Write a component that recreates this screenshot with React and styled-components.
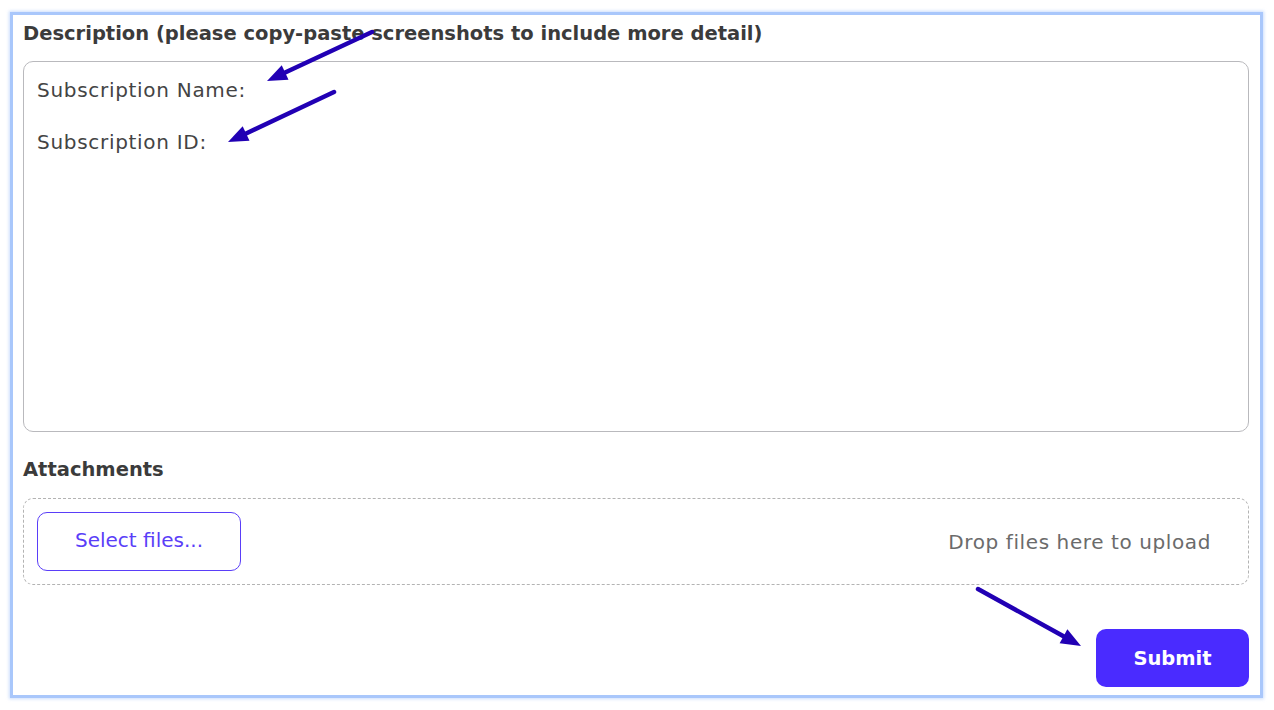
import React from 'react';
import styled, { createGlobalStyle } from 'styled-components';

const GlobalStyle = createGlobalStyle`
  html, body {
    margin: 0;
    padding: 0;
    background: #ffffff;
  }
  body {
    font-family: "DejaVu Sans", "Open Sans", sans-serif;
  }
`;

const Page = styled.div`
  position: relative;
  width: 1274px;
  height: 710px;
  padding: 12px 11px 12px 10px;
  box-sizing: border-box;
`;

const Frame = styled.div`
  height: 100%;
  box-sizing: border-box;
  border: 3px solid #a9c7fb;
  box-shadow: 0 0 3px 1px rgba(169, 199, 251, 0.6);
  padding: 2px 11px 8px 10px;
  display: flex;
  flex-direction: column;
`;

const Label = styled.div`
  font-size: 19.5px;
  font-weight: 600;
  color: #3b3b3b;
  line-height: 34px;
`;

const TextBox = styled.div`
  margin-top: 10px;
  height: 371px;
  box-sizing: border-box;
  border: 1px solid #b9b9bd;
  border-radius: 10px;
  padding: 15px 13px;
`;

const Line = styled.div`
  font-size: 20px;
  color: #444444;
  line-height: 26px;
  margin-bottom: 26px;
  letter-spacing: 0.7px;
`;

const SectionLabel = styled(Label)`
  margin-top: 21px;
`;

const DropZone = styled.div`
  margin-top: 11px;
  height: 87px;
  box-sizing: border-box;
  border: 1.5px dashed #b3b3b3;
  border-radius: 10px;
  padding: 0 37px 0 13px;
  display: flex;
  align-items: center;
  justify-content: space-between;
`;

const SelectButton = styled.button`
  width: 204px;
  height: 59px;
  background: #ffffff;
  border: 1.5px solid #5a3ef8;
  border-radius: 10px;
  color: #5a3ef8;
  font-family: inherit;
  font-size: 20px;
  padding: 0 0 3px;
  cursor: pointer;
`;

const DropHint = styled.span`
  font-size: 20px;
  color: #6b6b6b;
  letter-spacing: 0.6px;
`;

const Footer = styled.div`
  margin-top: auto;
  display: flex;
  justify-content: flex-end;
`;

const SubmitButton = styled.button`
  width: 153px;
  height: 58px;
  background: #4a2bff;
  border: none;
  border-radius: 10px;
  color: #ffffff;
  font-family: inherit;
  font-size: 19.5px;
  font-weight: 700;
  cursor: pointer;
`;

const Annotations = styled.svg`
  position: absolute;
  left: 0;
  top: 0;
  width: 1274px;
  height: 710px;
  pointer-events: none;
`;

const arrows = [
  { x1: 372, y1: 32, x2: 267, y2: 81 },
  { x1: 334, y1: 92, x2: 228, y2: 142 },
  { x1: 978, y1: 589, x2: 1081, y2: 646 },
];

function Arrow({ x1, y1, x2, y2 }) {
  const a = Math.atan2(y2 - y1, x2 - x1);
  const len = 20;
  const w = 8;
  const bx = x2 - len * Math.cos(a);
  const by = y2 - len * Math.sin(a);
  const px = -Math.sin(a) * w;
  const py = Math.cos(a) * w;
  return (
    <g>
      <line x1={x1} y1={y1} x2={bx} y2={by} stroke="#2100b4" strokeWidth="4.5" strokeLinecap="round" />
      <polygon
        points={`${x2},${y2} ${bx + px},${by + py} ${bx - px},${by - py}`}
        fill="#2100b4"
      />
    </g>
  );
}

export default function App() {
  return (
    <Page>
      <GlobalStyle />
      <Frame>
        <Label>Description (please copy-paste screenshots to include more detail)</Label>
        <TextBox>
          <Line>Subscription Name:</Line>
          <Line>Subscription ID:</Line>
        </TextBox>
        <SectionLabel>Attachments</SectionLabel>
        <DropZone>
          <SelectButton>Select files...</SelectButton>
          <DropHint>Drop files here to upload</DropHint>
        </DropZone>
        <Footer>
          <SubmitButton>Submit</SubmitButton>
        </Footer>
      </Frame>
      <Annotations viewBox="0 0 1274 710">
        {arrows.map((a, i) => (
          <Arrow key={i} {...a} />
        ))}
      </Annotations>
    </Page>
  );
}
